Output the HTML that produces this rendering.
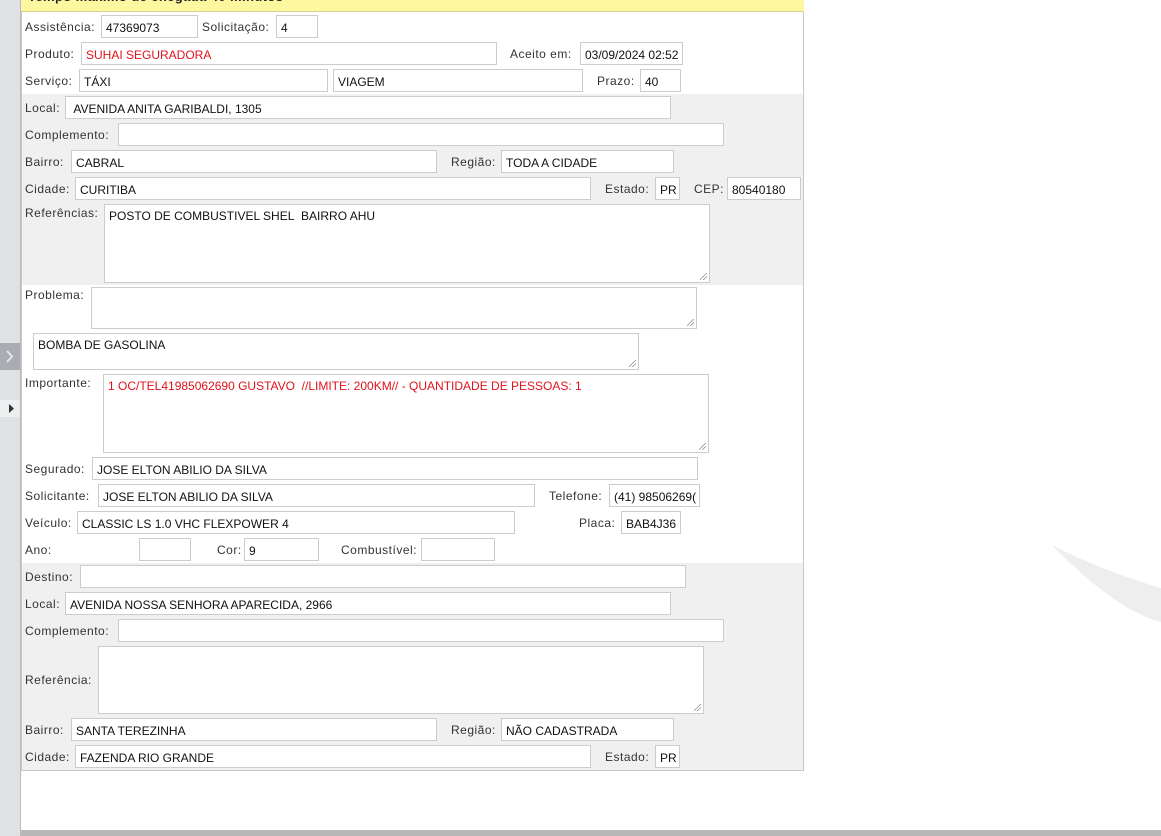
<!DOCTYPE html>
<html><head><meta charset="utf-8"><style>
*{box-sizing:border-box;margin:0;padding:0}
body{width:1161px;height:836px;position:relative;overflow:hidden;background:#fff;font-family:"Liberation Sans",Tahoma,sans-serif;font-size:12px;color:#333}
.a{position:absolute}
.l{position:absolute;line-height:14px;white-space:nowrap;letter-spacing:0.5px;margin-top:1px}
.i{position:absolute;background:#fff;border:1px solid #ccc;padding:5px 3px 0 4px;line-height:14px;white-space:nowrap;overflow:hidden;color:#111}
.r{color:#e0121b}
.t:after{content:"";position:absolute;right:2px;bottom:2px;width:7px;height:7px;background:linear-gradient(135deg,transparent 45%,#888 45%,#888 52%,transparent 52%,transparent 70%,#888 70%,#888 77%,transparent 77%)}
</style></head><body>
<div class="a" style="left:0;top:0;width:20px;height:836px;background:#dfe1e4"></div>
<div class="a" style="left:20px;top:0;width:1px;height:836px;background:#b8bbbf"></div>
<div class="a" style="left:0;top:343px;width:20px;height:27px;background:#a9adb2"></div>
<svg class="a" style="left:3px;top:348px" width="14" height="17"><path d="M4 3l5 5.5-5 5.5" stroke="#e4e6e8" stroke-width="2" fill="none"/></svg>
<div class="a" style="left:0;top:400px;width:20px;height:17px;background:#eceeef"></div>
<svg class="a" style="left:9px;top:404px" width="6" height="9"><path d="M0 0l5 4.5-5 4.5z" fill="#333"/></svg>
<div class="a" style="left:21px;top:830px;width:1140px;height:6px;background:#b8b8b8"></div>
<svg class="a" style="left:1040px;top:530px" width="121" height="100"><path d="M12 15 Q60 40 121 58 L121 92 Q75 80 12 15z" fill="#eeeeee"/></svg>
<div class="a" style="left:21px;top:0;width:783px;height:771px;border:1px solid #c8c8c8;border-top:none;background:#fff"></div>
<div class="a" style="left:21px;top:0;width:783px;height:12px;background:#fdf8a0;border-bottom:1px solid #d6d28a;overflow:hidden"><div style="position:absolute;left:7px;top:-11px;font-weight:bold;font-size:13px;letter-spacing:0.4px;color:#222;white-space:nowrap">Tempo máximo de chegada 40 minutos</div></div>
<div class="a" style="left:22px;top:94px;width:781px;height:191px;background:#f0f0f0"></div>
<div class="a" style="left:22px;top:563px;width:781px;height:207px;background:#f0f0f0"></div>

<div class="l" style="left:25px;top:19px">Assistência:</div><div class="i" style="left:101px;top:15px;width:97px;height:23px">47369073</div>
<div class="l" style="left:202px;top:19px">Solicitação:</div><div class="i" style="left:276px;top:15px;width:42px;height:23px">4</div>
<div class="l" style="left:25px;top:46px">Produto:</div><div class="i r" style="left:81px;top:42px;width:416px;height:23px">SUHAI SEGURADORA</div>
<div class="l" style="left:510px;top:46px">Aceito em:</div><div class="i" style="left:580px;top:42px;width:103px;height:23px">03/09/2024 02:52</div>
<div class="l" style="left:25px;top:73px">Serviço:</div><div class="i" style="left:79px;top:69px;width:249px;height:23px">TÁXI</div>
<div class="i" style="left:333px;top:69px;width:250px;height:23px">VIAGEM</div>
<div class="l" style="left:597px;top:73px">Prazo:</div><div class="i" style="left:640px;top:69px;width:41px;height:23px">40</div>

<div class="l" style="left:25px;top:100px">Local:</div><div class="i" style="left:65px;top:96px;width:606px;height:23px">&nbsp;AVENIDA ANITA GARIBALDI, 1305</div>
<div class="l" style="left:25px;top:127px">Complemento:</div><div class="i" style="left:118px;top:123px;width:606px;height:23px"></div>
<div class="l" style="left:25px;top:154px">Bairro:</div><div class="i" style="left:71px;top:150px;width:366px;height:23px">CABRAL</div>
<div class="l" style="left:451px;top:154px">Região:</div><div class="i" style="left:501px;top:150px;width:173px;height:23px">TODA A CIDADE</div>
<div class="l" style="left:25px;top:181px">Cidade:</div><div class="i" style="left:75px;top:177px;width:516px;height:23px">CURITIBA</div>
<div class="l" style="left:605px;top:181px">Estado:</div><div class="i" style="left:655px;top:177px;width:25px;height:23px">PR</div>
<div class="l" style="left:694px;top:181px">CEP:</div><div class="i" style="left:727px;top:177px;width:74px;height:23px">80540180</div>
<div class="l" style="left:25px;top:205px">Referências:</div><div class="i t" style="left:104px;top:204px;width:606px;height:79px;padding-top:4px">POSTO DE COMBUSTIVEL SHEL&nbsp; BAIRRO AHU</div>

<div class="l" style="left:25px;top:287px">Problema:</div><div class="i t" style="left:91px;top:287px;width:606px;height:42px"></div>
<div class="i t" style="left:33px;top:333px;width:606px;height:37px;padding-top:4px">BOMBA DE GASOLINA</div>
<div class="l" style="left:25px;top:375px">Importante:</div><div class="i t r" style="left:103px;top:374px;width:606px;height:79px;padding-top:4px">1 OC/TEL41985062690 GUSTAVO&nbsp; //LIMITE: 200KM// - QUANTIDADE DE PESSOAS: 1</div>
<div class="l" style="left:25px;top:461px">Segurado:</div><div class="i" style="left:92px;top:457px;width:606px;height:23px">JOSE ELTON ABILIO DA SILVA</div>
<div class="l" style="left:25px;top:488px">Solicitante:</div><div class="i" style="left:98px;top:484px;width:437px;height:23px">JOSE ELTON ABILIO DA SILVA</div>
<div class="l" style="left:549px;top:488px">Telefone:</div><div class="i" style="left:609px;top:484px;width:91px;height:23px">(41) 98506269(</div>
<div class="l" style="left:25px;top:515px">Veículo:</div><div class="i" style="left:77px;top:511px;width:438px;height:23px">CLASSIC LS 1.0 VHC FLEXPOWER 4</div>
<div class="l" style="left:579px;top:515px">Placa:</div><div class="i" style="left:621px;top:511px;width:60px;height:23px">BAB4J36</div>
<div class="l" style="left:25px;top:542px">Ano:</div><div class="i" style="left:139px;top:538px;width:52px;height:23px"></div>
<div class="l" style="left:217px;top:542px">Cor:</div><div class="i" style="left:244px;top:538px;width:75px;height:23px">9</div>
<div class="l" style="left:341px;top:542px">Combustível:</div><div class="i" style="left:421px;top:538px;width:74px;height:23px"></div>

<div class="l" style="left:25px;top:569px">Destino:</div><div class="i" style="left:80px;top:565px;width:606px;height:23px"></div>
<div class="l" style="left:25px;top:596px">Local:</div><div class="i" style="left:65px;top:592px;width:606px;height:23px">AVENIDA NOSSA SENHORA APARECIDA, 2966</div>
<div class="l" style="left:25px;top:623px">Complemento:</div><div class="i" style="left:118px;top:619px;width:606px;height:23px"></div>
<div class="l" style="left:25px;top:672px">Referência:</div><div class="i t" style="left:98px;top:646px;width:606px;height:68px"></div>
<div class="l" style="left:25px;top:722px">Bairro:</div><div class="i" style="left:71px;top:718px;width:366px;height:23px">SANTA TEREZINHA</div>
<div class="l" style="left:451px;top:722px">Região:</div><div class="i" style="left:501px;top:718px;width:173px;height:23px">NÃO CADASTRADA</div>
<div class="l" style="left:25px;top:749px">Cidade:</div><div class="i" style="left:75px;top:745px;width:516px;height:23px">FAZENDA RIO GRANDE</div>
<div class="l" style="left:605px;top:749px">Estado:</div><div class="i" style="left:655px;top:745px;width:25px;height:23px">PR</div>
</body></html>
